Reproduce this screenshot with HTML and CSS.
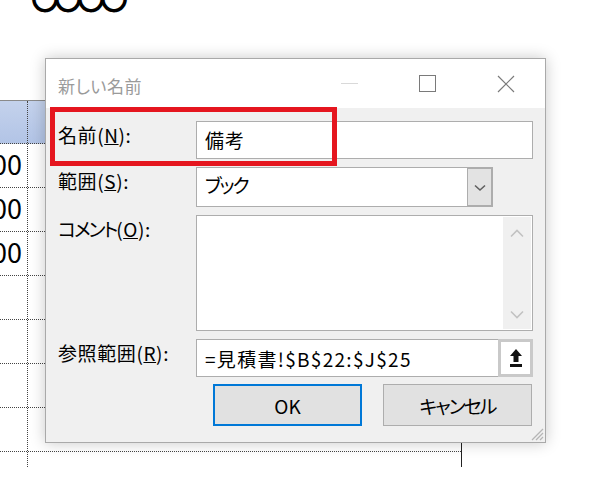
FILE: index.html
```html
<!DOCTYPE html>
<html lang="ja">
<head>
    <meta charset="UTF-8">
    <title>新しい名前</title>
    <link rel="stylesheet" href="styles.css">
</head>
<body>

    <!-- 背景のシート -->
    <div class="sheet-title">〇〇〇〇</div>
    <div class="sheet">
        <div class="row head"><div class="cell"></div><div class="cell"></div></div>
        <div class="row"><div class="cell num">00</div><div class="cell"></div></div>
        <div class="row"><div class="cell num">00</div><div class="cell"></div></div>
        <div class="row"><div class="cell num">00</div><div class="cell"></div></div>
        <div class="row"><div class="cell"></div><div class="cell"></div></div>
        <div class="row"><div class="cell"></div><div class="cell"></div></div>
        <div class="row"><div class="cell"></div><div class="cell"></div></div>
        <div class="row"><div class="cell"></div><div class="cell"></div></div>
        <div class="row last"><div class="cell"></div><div class="cell"></div></div>
    </div>

    <!-- ダイアログ -->
    <div class="dialog">
        <div class="titlebar">
            <span class="title">新しい名前</span>
            <div class="controls">
                <span class="ctl">
                    <svg width="18" height="18" viewBox="0 0 18 18"><line x1="0" y1="8.5" x2="17" y2="8.5" stroke="#d9d9d9" stroke-width="1"/></svg>
                </span>
                <span class="ctl">
                    <svg width="18" height="18" viewBox="0 0 18 18"><rect x="0.5" y="0.5" width="16" height="16" fill="none" stroke="#7a7a7a" stroke-width="1"/></svg>
                </span>
                <span class="ctl">
                    <svg width="18" height="18" viewBox="0 0 18 18"><path d="M1 1 L17 17 M17 1 L1 17" stroke="#7a7a7a" stroke-width="1.2"/></svg>
                </span>
            </div>
        </div>

        <div class="form">
            <label class="label">名前(<u>N</u>):</label>
            <div class="field text">備考</div>

            <label class="label">範囲(<u>S</u>):</label>
            <div class="select-row">
                <div class="field select">
                    <span class="kana">ブック</span>
                    <span class="drop">
                        <svg width="12" height="8" viewBox="0 0 12 8"><path d="M1 1.5 L6 6 L11 1.5" fill="none" stroke="#606060" stroke-width="1.6"/></svg>
                    </span>
                </div>
            </div>

            <label class="label"><span class="kana">コメント</span>(<u>O</u>):</label>
            <div class="field area">
                <div class="scrollbar">
                    <svg width="14" height="9" viewBox="0 0 14 9"><path d="M1 7.5 L7 1.5 L13 7.5" fill="none" stroke="#c2c2c2" stroke-width="1.6"/></svg>
                    <svg width="14" height="9" viewBox="0 0 14 9"><path d="M1 1.5 L7 7.5 L13 1.5" fill="none" stroke="#c2c2c2" stroke-width="1.6"/></svg>
                </div>
            </div>

            <label class="label">参照範囲(<u>R</u>):</label>
            <div class="field ref">
                <span class="ref-text">=見積書!$B$22:$J$25</span>
                <span class="collapse">
                    <svg width="14" height="20" viewBox="0 0 14 20"><path d="M7 1 L13 8 L9.5 8 L9.5 14 L4.5 14 L4.5 8 L1 8 Z" fill="#111"/><rect x="1" y="16" width="12" height="3" fill="#111"/></svg>
                </span>
            </div>

            <div class="buttons">
                <button class="btn default">OK</button>
                <button class="btn"><span class="kana">キャンセル</span></button>
            </div>
        </div>

        <!-- 赤い枠 -->
        <div class="highlight"></div>

        <svg class="grip" width="15" height="15" viewBox="0 0 15 15">
            <path d="M14 3 L3 14 M14 7 L7 14 M14 11 L11 14" stroke="#b5b5b5" stroke-width="1.3"/>
        </svg>
    </div>

</body>
</html>
```

FILE: styles.css
```css
/* 基本 */
body {
    margin: 0;
    width: 600px;
    height: 496px;
    overflow: hidden;
    background: #fff;
    position: relative;
    font-family: "Noto Sans CJK JP", sans-serif;
    color: #000;
}

/* 背景シート */
.sheet-title {
    font-size: 28px;
    font-weight: bold;
    line-height: 28px;
    height: 10px;
    margin-top: -16px;
    padding-left: 31px;
    letter-spacing: -5px;
}

.sheet {
    margin-top: 106px;
    width: 461px;
    border-top: 1px solid #8a8a8a;
    border-right: 1px solid #222;
}

.row {
    display: grid;
    grid-template-columns: 28px 1fr;
    height: 44px;
    border-bottom: 1px dotted #444;
    box-sizing: border-box;
}

.row.head {
    height: 43px;
    background: linear-gradient(#c4d2ec, #b2c4e6);
}

.row.last {
    height: 15px;
    border-bottom: none;
}

.cell {
    border-right: 1px dotted #444;
}

.cell:last-child {
    border-right: none;
}

.num {
    display: flex;
    justify-content: flex-end;
    align-items: center;
    overflow: hidden;
    font-size: 27px;
    padding-right: 5px;
    padding-bottom: 4px;
    box-sizing: border-box;
}

/* ダイアログ */
.dialog {
    position: absolute;
    left: 45px;
    top: 58px;
    width: 501px;
    height: 385px;
    box-sizing: border-box;
    border: 1px solid #a9a9a9;
    background: #f0f0f0;
    box-shadow: 0 0 14px rgba(0, 0, 0, 0.22);
    font-feature-settings: "palt";
}

.titlebar {
    height: 49px;
    background: #fff;
    display: flex;
    align-items: center;
}

.title {
    padding-left: 12px;
    font-size: 17px;
    color: #9a9a9a;
    flex: 1;
    margin-top: 3px;
    letter-spacing: 0.5px;
}

.controls {
    display: flex;
}

.ctl {
    width: 78px;
    display: flex;
    justify-content: center;
    align-items: center;
    height: 49px;
}

.form {
    display: grid;
    grid-template-columns: 138px 337px;
    grid-template-rows: 38px 40px 116px 38px 42px;
    row-gap: 8px;
    padding: 13px 12px 16px 12px;
}

.label {
    font-size: 19px;
    line-height: 26px;
    padding-top: 1px;
    white-space: nowrap;
    letter-spacing: 0.6px;
}

/* カナを少し詰める */
.kana {
    letter-spacing: -2px;
}

.field {
    background: #fff;
    border: 1px solid #adadad;
    box-sizing: border-box;
    font-size: 19px;
}

.text {
    padding-left: 8px;
    line-height: 36px;
    letter-spacing: 1px;
}

.select-row {
    display: flex;
}

.select {
    width: 297px;
    display: flex;
    align-items: center;
    justify-content: space-between;
    padding-left: 8px;
}

.select .kana {
    margin-top: -6px;
}

.drop {
    width: 26px;
    height: 38px;
    margin-right: -1px;
    background: #e3e3e3;
    border: 1px solid #adadad;
    border-right: 2px solid #adadad;
    box-sizing: border-box;
    display: flex;
    justify-content: center;
    align-items: center;
    padding-top: 2px;
}

.area {
    display: flex;
    justify-content: flex-end;
    padding: 1px 1px 1px 0;
}

.scrollbar {
    width: 28px;
    background: #f0f0f0;
    display: flex;
    flex-direction: column;
    justify-content: space-between;
    align-items: center;
    padding: 12px 0 10px;
}

.ref {
    display: flex;
    align-items: center;
    justify-content: space-between;
    padding-left: 8px;
}

.ref-text {
    letter-spacing: 1.3px;
}

.collapse {
    width: 35px;
    height: 38px;
    margin: -1px -1px -1px 0;
    box-sizing: border-box;
    border: 3px solid #c9c9c9;
    background: #fff;
    display: flex;
    justify-content: center;
    align-items: center;
}

.buttons {
    grid-column: 2;
    display: flex;
    justify-content: flex-end;
    gap: 21px;
    margin-top: -1px;
    padding-right: 1px;
}

.btn {
    width: 149px;
    height: 42px;
    background: #e1e1e1;
    border: 1px solid #adadad;
    font-family: "Noto Sans CJK JP", sans-serif;
    font-feature-settings: "palt";
    font-size: 19px;
    color: #000;
    padding: 0;
}

.btn.default {
    border: 2px solid #0078d7;
}

/* 赤い枠 */
.highlight {
    position: absolute;
    left: 4px;
    top: 48px;
    width: 287px;
    height: 59px;
    box-sizing: border-box;
    border: 5px solid #e5161f;
}

.grip {
    position: absolute;
    right: 1px;
    bottom: 1px;
}
```
